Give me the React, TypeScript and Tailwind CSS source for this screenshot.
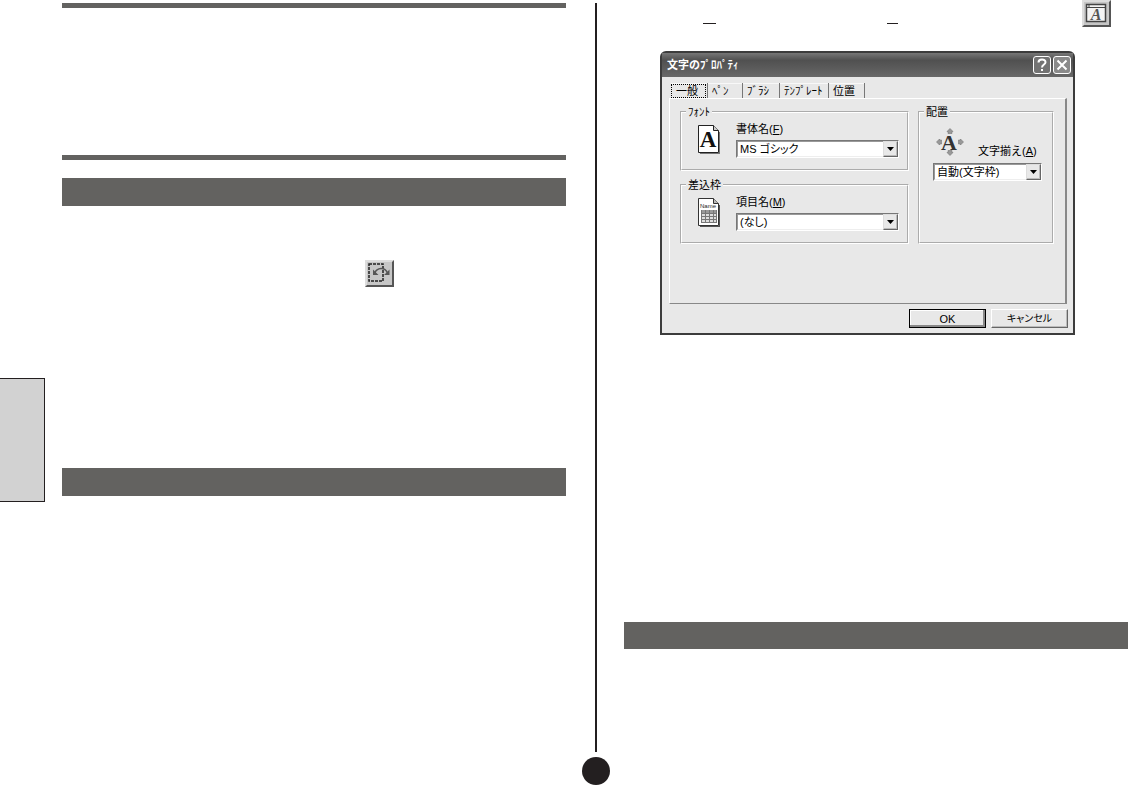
import { useState, type ReactNode } from "react";

const TABS = [
  { label: "一般", className: "w-[37px]" },
  { label: "ﾍﾟﾝ", className: "w-[35px]" },
  { label: "ﾌﾞﾗｼ", className: "w-[37px]" },
  { label: "ﾃﾝﾌﾟﾚｰﾄ", className: "w-[49px]" },
  { label: "位置", className: "w-[36px]" },
];

function FontIcon() {
  return (
    <svg width="22" height="29" viewBox="0 0 22 29" aria-hidden="true">
      <path d="M2 28h19V7h1v22H2z" fill="#777" />
      <path d="M.5.5h15l5 5v22H.5z" fill="#fff" stroke="#222" />
      <path d="M15.5.5v5h5" fill="#ccc" stroke="#222" />
      <text
        x="10"
        y="22"
        textAnchor="middle"
        fontSize="23"
        fontWeight="bold"
        fontFamily="Liberation Serif, serif"
        fill="#111"
      >
        A
      </text>
    </svg>
  );
}

function NameIcon() {
  return (
    <svg width="22" height="29" viewBox="0 0 22 29" aria-hidden="true">
      <path d="M2 28h19V7h1v22H2z" fill="#555" />
      <path d="M.5.5h15l5 5v22H.5z" fill="#fff" stroke="#333" />
      <path d="M15.5.5v5h5" fill="#bbb" stroke="#333" />
      <text
        x="10"
        y="10"
        textAnchor="middle"
        fontSize="6"
        fontFamily="Liberation Sans, sans-serif"
        fill="#222"
      >
        Name
      </text>
      <path d="M3 12h16v13H3z" fill="#ddd" />
      <path d="M3 12h16v3H3z" fill="#999" />
      <path
        d="M3.5 12v13M7.5 12v13M11.5 12v13M15.5 12v13M18.5 12v13M3 15.5h16M3 18.5h16M3 21.5h16M3 24.5h16"
        stroke="#777"
      />
    </svg>
  );
}

function AlignIcon() {
  return (
    <svg width="28" height="29" viewBox="0 0 28 29" aria-hidden="true">
      <g fill="#999" stroke="#777" strokeWidth=".6">
        <path d="M14 .5 17 3.500H16v2h-4v-2h-1z" />
        <path d="M14 27.500 11 24.500H12v-2h4v2h1z" />
        <path d="M.5 14 3.500 11V12h2v4h-2v1z" />
        <path d="M27.500 14 24.500 11V12h-2v4h2v1z" />
      </g>
      <text
        x="13"
        y="22"
        textAnchor="middle"
        fontSize="22"
        fontWeight="bold"
        fontFamily="Liberation Serif, serif"
        fill="#333"
      >
        A
      </text>
    </svg>
  );
}

function RotateIcon() {
  return (
    <svg width="25" height="23" viewBox="0 0 25 23" aria-hidden="true">
      <rect
        x="2"
        y="2"
        width="14"
        height="17"
        fill="none"
        stroke="#222"
        strokeWidth="1.500"
        strokeDasharray="3 1"
      />
      <path d="M7.500 11.500C10 5 18 5 20.500 11" fill="none" stroke="#555" strokeWidth="1.500" />
      <path d="M6 7.500v5.500h5.500zM22.500 7.500v5.500H17z" fill="#555" />
    </svg>
  );
}

function TextFrameIcon() {
  return (
    <svg width="25" height="23" viewBox="0 0 25 23" aria-hidden="true">
      <rect x="2.500" y="2.500" width="19" height="17" fill="#f4f4f4" stroke="#444" strokeWidth="1.500" />
      <path d="M2 5.500h20" stroke="#444" />
      <path d="M4 4h2" stroke="#444" />
      <text
        x="12"
        y="18"
        textAnchor="middle"
        fontSize="16"
        fontWeight="bold"
        fontStyle="italic"
        fontFamily="Liberation Serif, serif"
        fill="#555"
      >
        A
      </text>
    </svg>
  );
}

function ToolButton({ label, children }: { label: string; children: ReactNode }) {
  return (
    <button
      aria-label={label}
      className="flex h-[27px] w-[29px] items-center justify-center border-2 border-t-[#ddd] border-r-[#555] border-b-[#555] border-l-[#ddd] bg-[#c6c6c6]"
    >
      {children}
    </button>
  );
}

function Group({
  title,
  className,
  children,
}: {
  title: string;
  className: string;
  children: ReactNode;
}) {
  return (
    <fieldset className={`border-2 border-white [border-style:groove] ${className}`}>
      <legend className="ml-1 h-3 px-[2px] leading-3">{title}</legend>
      {children}
    </fieldset>
  );
}

function Label({ id, text, hotkey }: { id: string; text: string; hotkey: string }) {
  return (
    <label htmlFor={id} className="block h-4 leading-4 whitespace-nowrap">
      {text}(<u>{hotkey}</u>)
    </label>
  );
}

function Dropdown({ id, value }: { id: string; value: string }) {
  return (
    <div className="relative h-[18px] border border-t-[#777] border-r-white border-b-white border-l-[#777]">
      <select
        id={id}
        className="block h-4 w-full appearance-none border border-t-[#999] border-r-[#eee] border-b-[#eee] border-l-[#999] bg-white pl-[2px] leading-[14px] [font-feature-settings:'palt'] outline-none"
      >
        <option>{value}</option>
      </select>
      <span className="pointer-events-none absolute inset-y-0 right-0 flex w-[15px] items-center justify-center border border-t-[#ddd] border-r-[#666] border-b-[#666] border-l-[#ddd] bg-[#e8e8e8] shadow-[inset_-1px_-1px_0_#bbb]">
        <svg width="7" height="4" viewBox="0 0 7 4" aria-hidden="true">
          <path d="M0 0h7L3.500 4z" fill="#000" />
        </svg>
      </span>
    </div>
  );
}

function PropertiesDialog() {
  const [active, setActive] = useState("一般");

  return (
    <section
      role="dialog"
      aria-label="文字のプロパティ"
      className="w-[415px] rounded-t-md border-2 border-[#3c3c3c] bg-[#e8e8e8] pb-[5px] text-[11px] text-black"
    >
      <header className="flex h-6 items-center gap-[2px] bg-linear-to-b from-[#777] via-[#505050] via-30% to-[#686868] pr-[2px] pl-[5px]">
        <h1 className="flex-1 font-bold text-white">文字のﾌﾟﾛﾊﾟﾃｨ</h1>
        <button
          aria-label="ヘルプ"
          className="flex size-[18px] items-center justify-center rounded-[3px] border border-white bg-[#737373] text-white"
        >
          <svg width="12" height="14" viewBox="0 0 12 14" aria-hidden="true">
            <path d="M2.500 4.500C2.500.5 9.500.5 9.500 4.200 9.500 6.500 6 6.500 6 9.500" fill="none" stroke="currentColor" strokeWidth="2" />
            <path d="M5 11h2v2H5z" fill="currentColor" />
          </svg>
        </button>
        <button
          aria-label="閉じる"
          className="flex size-[18px] items-center justify-center rounded-[3px] border border-white bg-[#8a8a8a] text-white"
        >
          <svg width="12" height="12" viewBox="0 0 12 12" aria-hidden="true">
            <path d="m1.500 1.500 9 9m0-9-9 9" stroke="currentColor" strokeWidth="2" />
          </svg>
        </button>
      </header>

      <div className="mr-[6px] ml-[7px]">
        <div role="tablist" className="flex h-[21px] items-end pt-[3px] pl-[2px]">
          {TABS.map((tab) => (
            <button
              key={tab.label}
              role="tab"
              aria-selected={active === tab.label}
              onClick={() => setActive(tab.label)}
              className={`h-[15px] border-r border-[#777] text-left leading-[14px] whitespace-nowrap shadow-[inset_0_1px_0_#f8f8f8] ${tab.className}`}
            >
              {active === tab.label ? (
                <span className="block h-[14px] w-[35px] border border-dotted border-black pl-1 leading-3">
                  {tab.label}
                </span>
              ) : (
                <span className="pl-1">{tab.label}</span>
              )}
            </button>
          ))}
        </div>

        <div
          role="tabpanel"
          className="flex h-[206px] gap-[9px] border-t border-r-2 border-b border-l border-t-white border-r-[#888] border-b-[#888] border-l-white pt-[7px] pl-[10px]"
        >
          <div className="flex w-[229px] flex-col gap-2">
            <Group title="ﾌｫﾝﾄ" className="h-[65px]">
              <div className="flex gap-4 pt-[3px] pl-4">
                <div className="pt-1">
                  <FontIcon />
                </div>
                <div className="w-[163px]">
                  <Label id="typeface" text="書体名" hotkey="F" />
                  <div className="mt-[3px]">
                    <Dropdown id="typeface" value="MS ゴシック" />
                  </div>
                </div>
              </div>
            </Group>
            <Group title="差込枠" className="h-[65px]">
              <div className="flex gap-4 pt-[3px] pl-4">
                <div className="pt-1">
                  <NameIcon />
                </div>
                <div className="w-[163px]">
                  <Label id="field" text="項目名" hotkey="M" />
                  <div className="mt-[3px]">
                    <Dropdown id="field" value="(なし)" />
                  </div>
                </div>
              </div>
            </Group>
          </div>
          <Group title="配置" className="h-[138px] w-[136px]">
            <div className="flex gap-[14px] pt-[10px] pl-4">
              <AlignIcon />
              <div className="pt-[15px]">
                <Label id="align" text="文字揃え" hotkey="A" />
              </div>
            </div>
            <div className="mt-1 ml-[13px] w-[109px]">
              <Dropdown id="align" value="自動(文字枠)" />
            </div>
          </Group>
        </div>
      </div>

      <footer className="mt-[5px] flex justify-end gap-[5px] pr-[5px]">
        <button className="h-[19px] w-[77px] border border-black bg-[#e8e8e8] leading-4 shadow-[inset_-2px_-2px_0_#888,inset_1px_1px_0_#fff]">
          OK
        </button>
        <button className="h-[19px] w-[77px] border border-t-white border-r-[#666] border-b-[#666] border-l-white bg-[#e8e8e8] text-[10px] leading-4 shadow-[inset_-1px_-1px_0_#bbb] [font-feature-settings:'palt']">
          キャンセル
        </button>
      </footer>
    </section>
  );
}

export default function App() {
  return (
    <main className="flex min-h-screen bg-white font-['Liberation_Sans','Noto_Sans_CJK_JP',sans-serif]">
      <aside className="w-[62px] shrink-0 pt-[378px]">
        <div className="h-[124px] w-[45px] border border-l-0 border-[#231f20] bg-[#d2d2d2]" />
      </aside>

      <div className="min-w-0 flex-1 pt-[3px]">
        <div className="h-[5px] bg-[#636260]" />
        <div className="mt-[147px] h-[5px] bg-[#636260]" />
        <div className="mt-[18px] h-7 bg-[#636260]" />
        <div className="mt-[54px] ml-[303px]">
          <ToolButton label="回転">
            <RotateIcon />
          </ToolButton>
        </div>
        <div className="mt-[181px] h-7 bg-[#636260]" />
      </div>

      <div className="flex w-[58px] shrink-0 flex-col items-center pt-[3px] pl-[2px]">
        <div className="h-[749px] w-[2px] bg-[#231f20]" />
        <div className="mt-[5px] size-7 rounded-full bg-[#231f20]" />
      </div>

      <div className="min-w-0 flex-1">
        <div className="flex h-7 items-start pr-[17px] pl-[79px]">
          <div className="mt-[23px] h-px w-[13px] bg-[#231f20]" />
          <div className="mt-[23px] ml-[171px] h-px w-[11px] bg-[#231f20]" />
          <div className="ml-auto">
            <ToolButton label="文字枠">
              <TextFrameIcon />
            </ToolButton>
          </div>
        </div>
        <div className="mt-[23px] ml-9">
          <PropertiesDialog />
        </div>
        <div className="mt-[287px] h-[27px] bg-[#636260]" />
      </div>
    </main>
  );
}
